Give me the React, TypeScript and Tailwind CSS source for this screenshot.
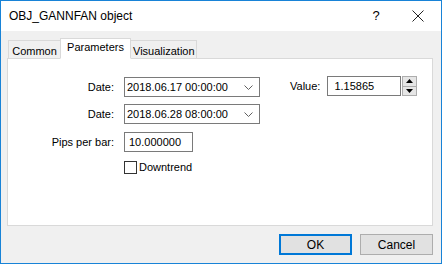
import React, { useState } from 'react';

const font = { fontFamily: '"Liberation Sans", Arial, sans-serif' };

const tabs = ['Common', 'Parameters', 'Visualization'];

const ComboBox = ({ value }: { value: string }) => (
  <div className="flex items-center w-[136px] h-[20px] bg-white border border-[#7a7a7a] pl-[2px] pr-[6px] text-[11px] text-black">
    <span className="flex-1">{value}</span>
    <svg width="9" height="5" viewBox="0 0 9 5" fill="none">
      <path d="M0.5 0.5 L4.5 4.5 L8.5 0.5" stroke="#606060" strokeWidth="1" />
    </svg>
  </div>
);

const App = () => {
  const [active, setActive] = useState('Parameters');
  const [downtrend, setDowntrend] = useState(false);

  return (
    <div style={font} className="w-[442px] h-[264px] flex flex-col border border-[#1883d7] bg-[#f0f0f0] text-black select-none">
      {/* Title bar */}
      <div className="h-[30px] bg-white flex items-center pl-[8px] shrink-0">
        <span className="text-[12px] flex-1">OBJ_GANNFAN object</span>
        <span className="text-[13px] w-[20px] text-center mr-[26px]">?</span>
        <svg width="12" height="12" viewBox="0 0 12 12" className="mr-[17px]">
          <path d="M0.5 0.5 L11.5 11.5 M11.5 0.5 L0.5 11.5" stroke="#222" strokeWidth="1" />
        </svg>
      </div>

      {/* Body */}
      <div className="flex-1 flex flex-col pt-[7px] pl-[6px] pr-[8px]">
        {/* Tabs */}
        <div className="flex items-end h-[20px] pl-[1px] relative z-10">
          {tabs.map((t) => {
            const sel = t === active;
            return (
              <button
                key={t}
                onClick={() => setActive(t)}
                className={`text-[11px] border border-[#d9d9d9] px-[2px] leading-none text-center ${
                  sel
                    ? 'h-[21px] bg-white border-b-white pt-[1px] pb-[4px] -mb-[1px] -mx-[1px] z-10'
                    : 'h-[18px] bg-[#f0f0f0] border-b-0 pt-[3px]'
                } ${t === 'Common' ? 'w-[53px]' : t === 'Parameters' ? 'w-[71px]' : 'w-[67px]'}`}
              >
                {t}
              </button>
            );
          })}
        </div>

        {/* Panel */}
        <div className="w-[426px] h-[168px] bg-white border border-[#d9d9d9] pt-[18px]">
          <div className="flex">
            <div className="flex flex-col">
              <div className="flex items-center h-[20px]">
                <span className="w-[116px] text-right pr-[10px] text-[11px]">Date:</span>
                <ComboBox value="2018.06.17 00:00:00" />
              </div>
              <div className="flex items-center h-[20px] mt-[7px]">
                <span className="w-[116px] text-right pr-[10px] text-[11px]">Date:</span>
                <ComboBox value="2018.06.28 08:00:00" />
              </div>
              <div className="flex items-center h-[20px] mt-[8px]">
                <span className="w-[116px] text-right pr-[10px] text-[11px]">Pips per bar:</span>
                <div className="w-[69px] h-[20px] bg-white border border-[#7a7a7a] pl-[4px] text-[11px] flex items-center">
                  10.000000
                </div>
              </div>
              <label className="flex items-center mt-[7px] ml-[116px] cursor-pointer" onClick={() => setDowntrend(!downtrend)}>
                <span className="w-[13px] h-[13px] border border-[#333] bg-white flex items-center justify-center text-[10px] leading-none">
                  {downtrend ? '✓' : ''}
                </span>
                <span className="ml-[2px] text-[11px]">Downtrend</span>
              </label>
            </div>

            <div className="flex items-start ml-[30px] -mt-[1px]">
              <span className="text-[11px] h-[20px] flex items-center mr-[7px]">Value:</span>
              <div className="w-[74px] h-[20px] bg-white border border-[#7a7a7a] pl-[6px] text-[11px] flex items-center">
                1.15865
              </div>
              <div className="flex flex-col w-[15px] h-[20px] ml-[1px] border border-[#adadad] bg-[#e6e6e6]">
                <div className="flex-1 flex items-center justify-center border-b border-[#adadad]">
                  <svg width="7" height="4" viewBox="0 0 7 4"><path d="M3.5 0 L7 4 L0 4 Z" fill="#000" /></svg>
                </div>
                <div className="flex-1 flex items-center justify-center">
                  <svg width="7" height="4" viewBox="0 0 7 4"><path d="M0 0 L7 0 L3.5 4 Z" fill="#000" /></svg>
                </div>
              </div>
            </div>
          </div>
        </div>

        {/* Buttons */}
        <div className="flex justify-end mt-[8px] gap-[8px]">
          <button className="w-[73px] h-[21px] bg-[#e1e1e1] border-2 border-[#0078d7] text-[12px]">OK</button>
          <button className="w-[73px] h-[21px] bg-[#e1e1e1] border border-[#adadad] text-[12px]">Cancel</button>
        </div>
      </div>
    </div>
  );
};

export default App;
